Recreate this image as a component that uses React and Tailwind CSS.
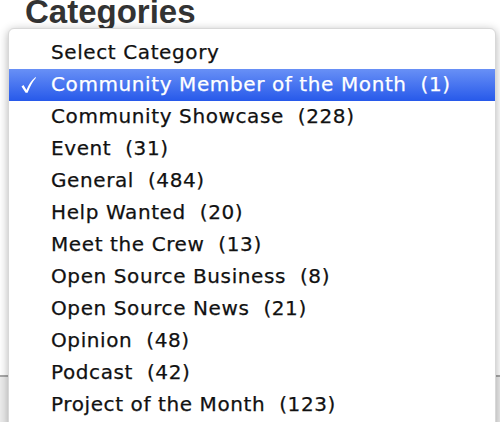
import React from "react";

const items = [
  ["Select Category", null],
  ["Community Member of the Month", "1"],
  ["Community Showcase", "228"],
  ["Event", "31"],
  ["General", "484"],
  ["Help Wanted", "20"],
  ["Meet the Crew", "13"],
  ["Open Source Business", "8"],
  ["Open Source News", "21"],
  ["Opinion", "48"],
  ["Podcast", "42"],
  ["Project of the Month", "123"],
];

export default function App() {
  return (
    <div className="relative h-[422px] w-[500px] overflow-hidden bg-white">
      <h2
        className="pl-[25px] text-[33px] font-bold leading-[30px] text-[#333] -mt-[3px]"
        style={{ fontFamily: "'Liberation Sans', Arial, sans-serif" }}
      >
        Categories
      </h2>
      <div className="mt-[348px] border-t-2 border-[#a8a8a8] bg-[#ececec] h-[60px]" />
      <div
        className="absolute left-[8px] top-[28px] w-[488px] rounded-[6px] bg-white pt-2 pb-2 shadow-[0_2px_10px_rgba(0,0,0,0.3)] border border-[#d8d8d8]"
        style={{ fontFamily: "'DejaVu Sans', 'Lucida Grande', sans-serif" }}
      >
        {items.map(([name, count], i) => {
          const selected = i === 1;
          return (
            <div
              key={name}
              className={
                "relative flex h-8 items-center whitespace-pre pl-[42px] pb-[3px] text-[20px] tracking-[0.6px] [-webkit-text-stroke:0.25px_currentColor] " +
                (selected
                  ? "bg-[linear-gradient(#6890f6,#2759ea)] text-white"
                  : "text-[#111]")
              }
            >
              {selected && (
                <svg
                  className="absolute left-[11px] top-[7px]"
                  width="17"
                  height="18"
                  viewBox="0 0 17 18"
                >
                  <path
                    d="M1.5 10.5 L3.5 9 L6.5 14 Q9.5 6 15.5 1 L16 1.8 Q11 7.5 7.6 16.8 L5.6 16.8 Z"
                    fill="white"
                  />
                </svg>
              )}
              {count ? `${name}  (${count})` : name}
            </div>
          );
        })}
      </div>
    </div>
  );
}
